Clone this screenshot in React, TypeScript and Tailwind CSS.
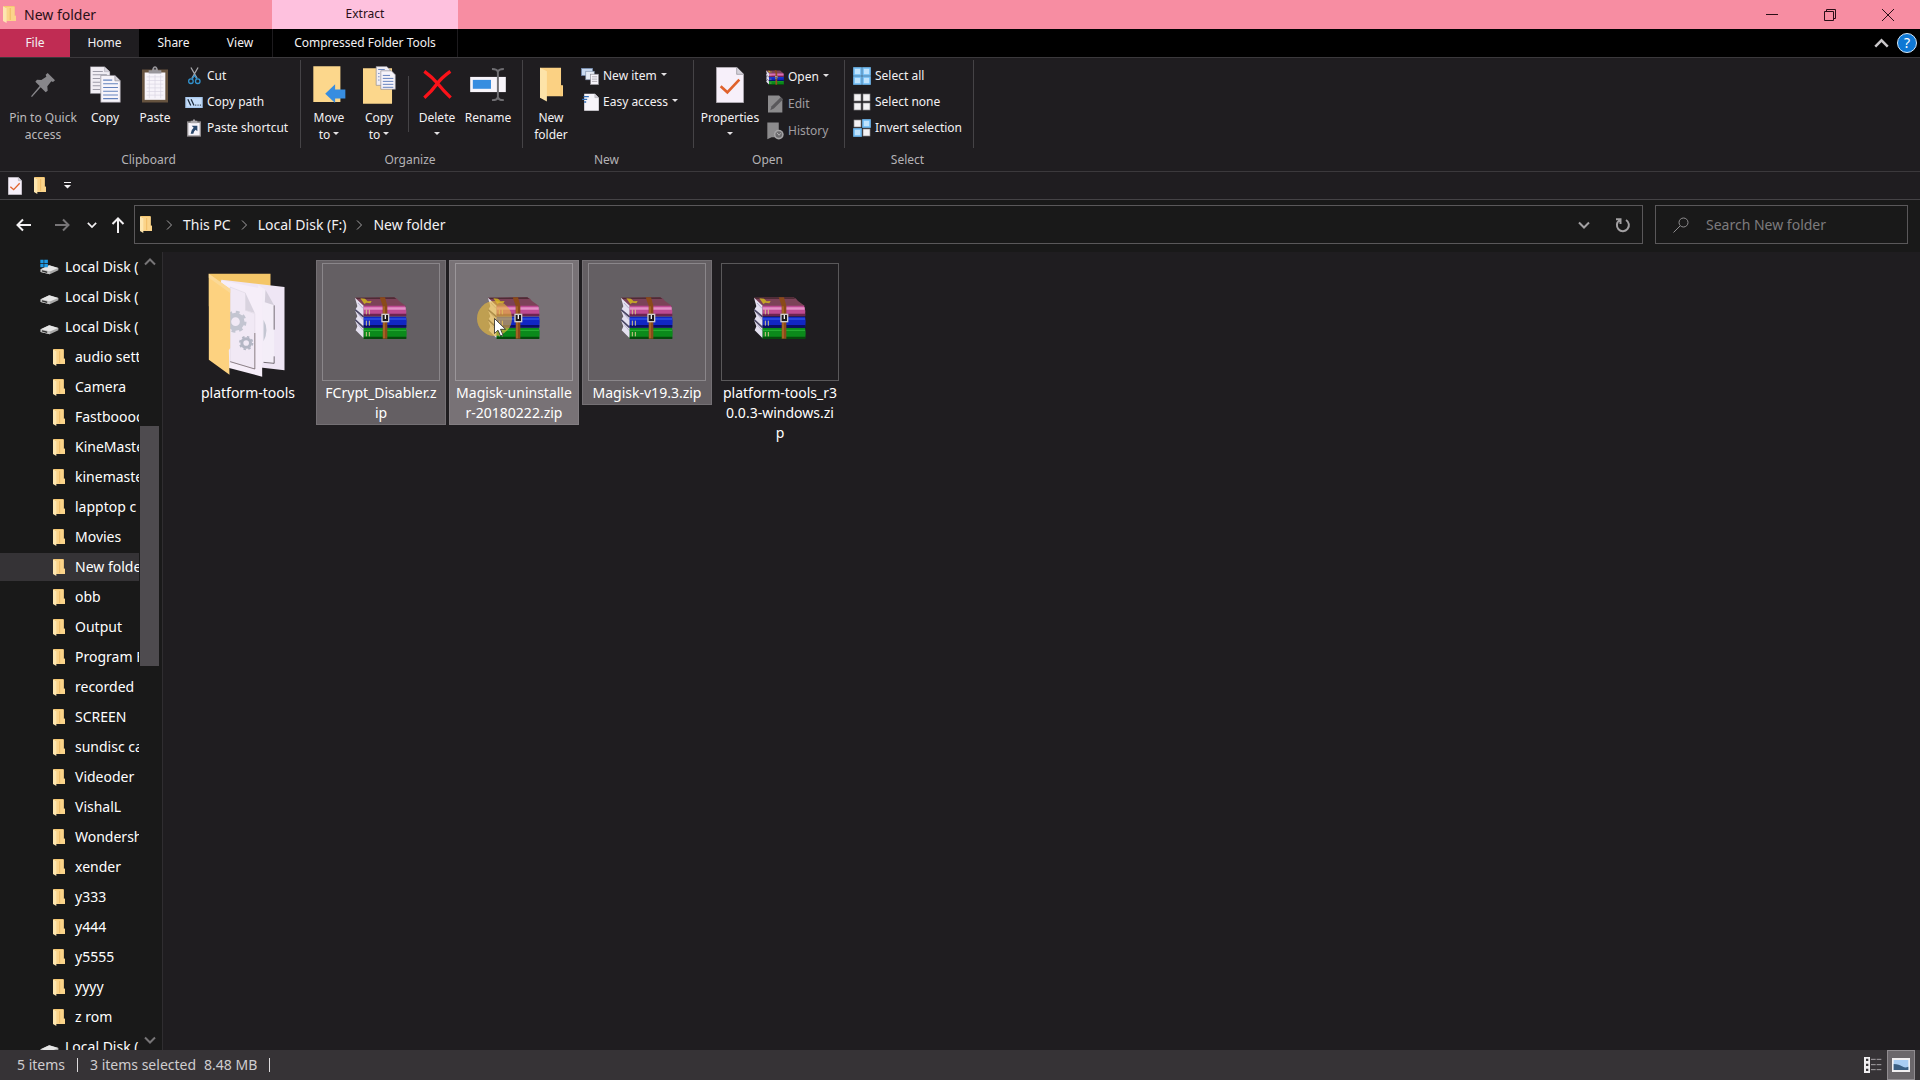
import React, { ReactNode } from "react";

/* ---------- Icons ---------- */

const FolderIcon = ({ className = "w-3 h-[17px]" }: { className?: string }) => (
    <svg viewBox="0 0 36 51" className={className} preserveAspectRatio="none" aria-hidden="true">
        <path d="M1 0H32V29H36V45H8Z" fill="#f5c873" />
        <path d="M9 3H32V29H36V45H9Z" fill="#fbd48a" />
        <path d="M0 1L10 7V51L0 45Z" fill="#fde6b0" />
        <path d="M20 6V42" stroke="#f0bd66" strokeWidth="3" />
    </svg>
);

const DriveIcon = ({ system = false }: { system?: boolean }) => (
    <svg viewBox="0 0 58 48" className="w-[19px] h-4 shrink-0" aria-hidden="true">
        <path d="M2 31L28 19L56 27V34L30 46L2 39Z" fill="#a9a9a9" />
        <path d="M2 31L28 19L56 27L30 38Z" fill="#e6e6e6" />
        <path d="M2 31L30 38V46L2 39Z" fill="#c9c9c9" />
        <path d="M6 36L22 40" stroke="#333" strokeWidth="4" />
        {system && <path d="M1 2H11V12H1ZM13 2H24V12H13ZM1 14H11V25H1ZM13 14H24V25H13Z" fill="#1e9be6" />}
    </svg>
);

const PinIcon = () => (
    <svg viewBox="0 0 72 72" className="w-6 h-6" aria-hidden="true">
        <path d="M50 0L72 22L66 27L61 25L49 40L50 53L44 58L29 43L3 72L0 70L26 39L13 26L18 20L31 21L46 11L44 5Z" fill="#87868a" />
    </svg>
);

const CopyIcon = () => (
    <svg viewBox="0 0 92 110" className="w-[31px] h-[37px]" aria-hidden="true">
        <path d="M1 2H43L59 17V82H1Z" fill="#f1eef4" stroke="#8d8b92" />
        <path d="M43 2V17H59" fill="#d5d2da" stroke="#8d8b92" />
        <path d="M8 16H38M8 26H50M8 37H30M8 48H30M8 59H30M8 70H30" stroke="#9d9ca8" strokeWidth="3" />
        <path d="M32 28H74L90 44V108H32Z" fill="#f7f4fa" stroke="#8d8b92" strokeWidth="2" />
        <path d="M74 28V44H90" fill="#d5d2da" stroke="#8d8b92" strokeWidth="2" />
        <path d="M39 42H66M39 53H83M39 64H83M39 75H83M39 86H83M39 97H83" stroke="#6482bd" strokeWidth="3" />
    </svg>
);

const PasteIcon = () => (
    <svg viewBox="0 0 78 110" className="w-[26px] h-[37px]" aria-hidden="true">
        <path d="M0 10H78V109H0Z" fill="#66533f" />
        <path d="M8 19H70V101H8Z" fill="#f7f4fa" />
        <path d="M14 32H64M14 43H64M14 54H64M14 65H64M14 76H64M14 87H64M22 26V96M39 26V96M56 26V96" stroke="#d9d4e2" strokeWidth="2" />
        <path d="M20 12H30Q32 0 39 0T48 12H58V22H20Z" fill="#98969b" />
        <circle cx="39" cy="8" r="3" fill="#3a383a" />
    </svg>
);

const CutIcon = () => (
    <svg viewBox="0 0 40 54" className="w-[13px] h-[18px]" aria-hidden="true">
        <path d="M9 1L28 34M31 1L12 34" stroke="#a8a8ac" strokeWidth="4" />
        <circle cx="9" cy="43" r="7" fill="none" stroke="#3292ce" strokeWidth="4" />
        <circle cx="30" cy="43" r="7" fill="none" stroke="#3292ce" strokeWidth="4" />
        <path d="M13 36L20 25L27 36" fill="none" stroke="#3292ce" strokeWidth="4" />
    </svg>
);

const CopyPathIcon = () => (
    <svg viewBox="0 0 54 34" className="w-[18px] h-[11px]" aria-hidden="true">
        <rect width="54" height="34" fill="#a9c9ee" />
        <rect x="4" y="4" width="46" height="26" fill="#c7defa" />
        <path d="M8 7L17 26M18 7L27 26" stroke="#1c2a3c" strokeWidth="4" />
        <path d="M31 25H34M38 25H41M45 25H48" stroke="#1c2a3c" strokeWidth="4" />
    </svg>
);

const PasteShortcutIcon = () => (
    <svg viewBox="0 0 42 54" className="w-[14px] h-[18px]" aria-hidden="true">
        <path d="M0 7H42V53H0Z" fill="#8f8b8d" />
        <path d="M4 12H38V49H4Z" fill="#f7f4fa" />
        <path d="M11 5H17Q21 -3 25 5H31V13H11Z" fill="#a8a5a9" />
        <path d="M14 20H31V37L26 32Q20 36 19 44H11Q12 32 20 26Z" fill="#29476b" />
    </svg>
);

const MoveToIcon = () => (
    <svg viewBox="0 0 98 112" className="w-[33px] h-[37px]" aria-hidden="true">
        <path d="M0 1H82V109H0Z" fill="#fcd78c" />
        <path d="M36 84L66 55V71H97V98H66V112Z" fill="#378de0" />
    </svg>
);

const CopyToIcon = () => (
    <svg viewBox="0 0 100 114" className="w-[33px] h-[38px]" aria-hidden="true">
        <path d="M0 6H88V114H0Z" fill="#fcd78c" />
        <path d="M40 1H72L82 11V58H40Z" fill="#f1eef4" stroke="#8d8b92" strokeWidth="2" />
        <path d="M54 14H86L98 26V70H54Z" fill="#f7f4fa" stroke="#8d8b92" strokeWidth="2" />
        <path d="M60 28H82M60 37H92M60 46H92M60 55H92M60 64H92M46 10H66M46 22H50M46 32H50M46 42H50" stroke="#6482bd" strokeWidth="3" />
    </svg>
);

const DeleteIcon = () => (
    <svg viewBox="0 0 86 88" className="w-[29px] h-[29px]" aria-hidden="true">
        <path d="M3 4Q28 22 44 42T83 84M82 4Q54 24 40 44T3 84" fill="none" stroke="#fb1219" strokeWidth="10" />
    </svg>
);

const RenameIcon = () => (
    <svg viewBox="0 0 108 100" className="w-9 h-[33px]" aria-hidden="true">
        <rect x="0" y="27" width="108" height="46" fill="#f7f4fa" />
        <rect x="8" y="36" width="55" height="27" fill="#378de0" />
        <path d="M66 3Q82 3 84 12Q86 3 102 3M84 10V90M66 98Q82 98 84 88Q86 98 102 98" fill="none" stroke="#6f6e72" strokeWidth="6" />
    </svg>
);

const NewFolderIcon = () => (
    <svg viewBox="0 0 70 104" className="w-[23px] h-[35px]" aria-hidden="true">
        <path d="M0 1H64V54H70V88H20L0 92Z" fill="#fbd183" />
        <path d="M0 1L21 12V104L0 92Z" fill="#fde3a8" />
        <path d="M64 54V88" stroke="#eebd64" strokeWidth="2" />
    </svg>
);

const NewItemIcon = () => (
    <svg viewBox="0 0 54 52" className="w-[18px] h-[17px]" aria-hidden="true">
        <rect x="1" y="1" width="34" height="22" fill="#c8d9ef" stroke="#6f88ae" strokeWidth="2" />
        <rect x="14" y="10" width="26" height="26" fill="#e5ebf4" stroke="#7f8da6" strokeWidth="2" />
        <rect x="29" y="19" width="24" height="32" fill="#f7f4fa" stroke="#8d8b92" strokeWidth="2" />
        <path d="M33 27H49M33 34H49M33 41H49" stroke="#8d8b92" strokeWidth="2" />
    </svg>
);

const EasyAccessIcon = () => (
    <svg viewBox="0 0 50 54" className="w-[17px] h-[18px]" aria-hidden="true">
        <path d="M6 2H38L50 14V53H6Z" fill="#f7f4fa" />
        <path d="M38 2V14H50" fill="#cfccd4" stroke="#8d8b92" />
        <path d="M4 11H20M0 19H15M6 27H12" stroke="#2f6db8" strokeWidth="4" />
    </svg>
);

const CheckDocIcon = ({ className }: { className: string }) => (
    <svg viewBox="0 0 84 108" className={className} aria-hidden="true">
        <path d="M1 1H62L83 22V107H1Z" fill="#f7f0fa" stroke="#a09da3" strokeWidth="2" />
        <path d="M62 1V22H83" fill="#d5d2da" stroke="#8d8b92" strokeWidth="2" />
        <path d="M14 58L34 76L70 38" fill="none" stroke="#e0622c" strokeWidth="8" />
    </svg>
);

const EditIcon = () => (
    <svg viewBox="0 0 46 54" className="w-[15px] h-[18px]" aria-hidden="true">
        <path d="M0 1H34L44 11V53H0Z" fill="#8c8b8d" />
        <path d="M7 46L11 34L39 6L46 13L18 41Z" fill="#59585b" />
    </svg>
);

const HistoryIcon = () => (
    <svg viewBox="0 0 52 54" className="w-[17px] h-[18px]" aria-hidden="true">
        <path d="M1 1H36V46H14L1 52Z" fill="#8c8b8d" />
        <circle cx="36" cy="38" r="15" fill="#a4a3a5" />
        <circle cx="36" cy="38" r="10" fill="#6c6b6e" />
        <path d="M30 32L37 40L42 34" fill="none" stroke="#b5b4b6" strokeWidth="3" />
    </svg>
);

const SelectIcon = ({ on }: { on: boolean[] }) => (
    <svg viewBox="0 0 54 54" className="w-[18px] h-[18px]" aria-hidden="true">
        {on.map((active, i) => (
            <rect
                key={i}
                x={(i % 2) * 27 + 3}
                y={Math.floor(i / 2) * 27 + 3}
                width="21"
                height="21"
                fill={active ? "#bfe3fd" : "#f4f2f4"}
                stroke={active ? "#72bdf3" : "#8a888b"}
                strokeWidth={active ? 5 : 2}
            />
        ))}
    </svg>
);

const WinrarIcon = ({ className }: { className: string }) => (
    <svg viewBox="0 0 156 126" className={className} aria-hidden="true">
        {/* Top cover */}
        <path d="M0 2L118 1Q126 3 132 12L154 28H26Q10 20 0 2Z" fill="#7c4258" />
        <path d="M0 2L118 1L124 6H6Z" fill="#4f2b35" />
        <path d="M16 4L30 5L38 13L50 12L46 19L34 17L28 21Z" fill="#c3a527" />
        {/* Page edges */}
        <path d="M0 2L26 26V124L2 100L7 88L0 70L7 58L0 40L7 28Z" fill="#e4e0ef" />
        <path d="M0 38L26 60M0 68L26 92" stroke="#4b4763" strokeWidth="5" />
        <path d="M9 18L24 34M9 50L24 68M9 82L24 100" stroke="#b6b0ce" strokeWidth="3" />
        {/* Spines */}
        <path d="M26 26H150Q156 40 153 57H26Z" fill="#bd4a92" />
        <path d="M26 31H152V38H26Z" fill="#e48fc6" />
        <path d="M26 50H154V58H26Z" fill="#6d2550" />
        <path d="M26 59H153Q157 74 153 91H26Z" fill="#1127c4" />
        <path d="M26 64H153V68H26Z" fill="#2d52e4" />
        <path d="M26 84H154V92H26Z" fill="#080e66" />
        <path d="M26 93H153Q157 108 153 125H26Z" fill="#0b8a1b" />
        <path d="M26 98H153V102H26Z" fill="#25ab32" />
        <path d="M26 119H154V126H26Z" fill="#064a0c" />
        <path d="M34 37V52M43 37V52M34 71V86M43 71V86M34 105V118M43 105V118" stroke="#d3c58a" strokeWidth="3" />
        {/* Strap and buckle */}
        <path d="M74 1H90L97 26V125H83V26Z" fill="#8a4a1a" />
        <path d="M87 28V124" stroke="#bf7a2e" strokeWidth="3" />
        <rect x="81" y="52" width="20" height="22" fill="#1e1a1a" stroke="#cfcccd" strokeWidth="4" />
        <path d="M91 54V66" stroke="#f2f2f2" strokeWidth="4" />
    </svg>
);

const Gear = ({ x, y, r, fill }: { x: number; y: number; r: number; fill: string }) => (
    <g fill="none" stroke={fill}>
        <circle cx={x} cy={y} r={r} strokeWidth={r * 0.7} />
        <circle cx={x} cy={y} r={r * 1.45} strokeWidth={r * 0.4} strokeDasharray={`${r * 0.57} ${r * 0.57}`} />
    </g>
);

const BigFolderIcon = () => (
    <svg viewBox="0 0 230 312" className="w-[77px] h-[104px]" aria-hidden="true">
        <path d="M2 2H187V100H2Z" fill="#f4c668" />
        <path d="M40 20L229 42V292L40 270Z" fill="#efe6f5" />
        <path d="M150 36L172 50L198 97V272L150 268Z" fill="#f4eef8" />
        <path d="M172 50L198 97L170 88Z" fill="#d4cedb" />
        <path d="M198 97V170M198 250V271L166 268" fill="none" stroke="#352f35" strokeWidth="2" />
        <path d="M166 140Q184 170 166 205Z" fill="#c4c6d2" />
        <path d="M38 22L162 47V311L60 284Z" fill="#f6eef9" />
        <path d="M66 42L112 60V112L140 122V288L66 266Z" fill="#f1e9f5" stroke="#cfc7d4" strokeWidth="1" />
        <path d="M112 60L140 120L112 112Z" fill="#d9d3df" />
        <path d="M140 180V288L66 266" fill="none" stroke="#5d5053" strokeWidth="2" />
        <Gear x={82} y={146} r={20} fill="#c3c5d1" />
        <Gear x={114} y={210} r={13} fill="#b3b6c4" />
        <path d="M2 2L66 48V225L62 232L64 305L2 260Z" fill="#fdd280" />
        <path d="M2 2L66 48V60L2 14Z" fill="#fbd997" />
    </svg>
);

const Chevron = ({ d, className }: { d: string; className: string }) => (
    <svg viewBox="0 0 12 12" className={className} fill="none" stroke="currentColor" aria-hidden="true">
        <path d={d} />
    </svg>
);

const DOWN = "M1 3.5L6 8.5L11 3.5";
const UP = "M1 8.5L6 3.5L11 8.5";
const RIGHT = "M4 1.5L8.5 6L4 10.5";

const Caret = () => (
    <svg viewBox="0 0 6 3" className="inline-block w-1.5 h-[3px] mb-1" aria-hidden="true">
        <path d="M0 0H6L3 3Z" fill="#e4e2e4" />
    </svg>
);

/* ---------- Ribbon ---------- */

type GroupProps = { label: string; width: string; children: ReactNode };

const Group = ({ label, width, children }: GroupProps) => (
    <section className={`flex flex-col shrink-0 ${width}`} aria-label={label}>
        <div className="flex h-[88px] border-r border-[#454346]">{children}</div>
        <div className="h-[23px] pr-1 leading-[23px] text-center text-[#b4b2b5]">{label}</div>
    </section>
);

type BigButtonProps = { icon: ReactNode; width?: string; disabled?: boolean; children: ReactNode };

const BigButton = ({ icon, width = "w-[50px]", disabled, children }: BigButtonProps) => (
    <button
        disabled={disabled}
        className={`flex flex-col items-center shrink-0 leading-[17px] whitespace-nowrap disabled:text-[#bcbabd] ${width}`}
    >
        <span className="flex h-[49px] items-center justify-center">{icon}</span>
        <span>{children}</span>
    </button>
);

type SmallButtonProps = { icon: ReactNode; caret?: boolean; disabled?: boolean; children: ReactNode };

const SmallButton = ({ icon, caret, disabled, children }: SmallButtonProps) => (
    <button disabled={disabled} className="flex h-[26px] items-center gap-1 whitespace-nowrap disabled:text-[#a09ea1]">
        <span className="flex w-[18px] justify-center">{icon}</span>
        <span>{children}</span>
        {caret && <Caret />}
    </button>
);

const Ribbon = () => (
    <div className="flex h-[115px] shrink-0 border-y border-[#3b393c] bg-[#1f1d20] pt-0.5 text-xs text-[#f3f1f3]">
        <Group label="Clipboard" width="w-[301px]">
            <BigButton icon={<PinIcon />} width="w-[86px]" disabled>
                Pin to Quick<br />access
            </BigButton>
            <BigButton icon={<CopyIcon />} width="w-[38px]">Copy</BigButton>
            <div className="flex pl-1.5">
                <BigButton icon={<PasteIcon />}>Paste</BigButton>
            </div>
            <div className="flex flex-col pt-[3px] pl-[5px]">
                <SmallButton icon={<CutIcon />}>Cut</SmallButton>
                <SmallButton icon={<CopyPathIcon />}>Copy path</SmallButton>
                <SmallButton icon={<PasteShortcutIcon />}>Paste shortcut</SmallButton>
            </div>
        </Group>

        <Group label="Organize" width="w-[222px]">
            <div className="flex pl-[3px]">
                <BigButton icon={<MoveToIcon />}>
                    Move<br />to <Caret />
                </BigButton>
                <BigButton icon={<CopyToIcon />}>
                    Copy<br />to <Caret />
                </BigButton>
            </div>
            <div className="mt-4 mr-[3px] ml-1 h-14 w-px bg-[#454346]" />
            <BigButton icon={<DeleteIcon />}>
                Delete<br /><Caret />
            </BigButton>
            <BigButton icon={<RenameIcon />} width="w-[52px]">Rename</BigButton>
        </Group>

        <Group label="New" width="w-[171px]">
            <div className="flex pl-[3px]">
                <BigButton icon={<NewFolderIcon />}>
                    New<br />folder
                </BigButton>
            </div>
            <div className="flex flex-col pt-[3px] pl-[5px]">
                <SmallButton icon={<NewItemIcon />} caret>New item</SmallButton>
                <SmallButton icon={<EasyAccessIcon />} caret>Easy access</SmallButton>
            </div>
        </Group>

        <Group label="Open" width="w-[151px]">
            <div className="flex pl-[3px]">
                <BigButton icon={<CheckDocIcon className="w-7 h-9" />} width="w-[66px]">
                    Properties<br /><Caret />
                </BigButton>
            </div>
            <div className="flex flex-col gap-px pt-1 pl-[3px]">
                <SmallButton icon={<WinrarIcon className="w-[18px] h-[15px]" />} caret>Open</SmallButton>
                <SmallButton icon={<EditIcon />} disabled>Edit</SmallButton>
                <SmallButton icon={<HistoryIcon />} disabled>History</SmallButton>
            </div>
        </Group>

        <Group label="Select" width="w-[129px]">
            <div className="flex flex-col pt-[3px] pl-2">
                <SmallButton icon={<SelectIcon on={[true, true, true, true]} />}>Select all</SmallButton>
                <SmallButton icon={<SelectIcon on={[false, false, false, false]} />}>Select none</SmallButton>
                <SmallButton icon={<SelectIcon on={[false, true, true, false]} />}>Invert selection</SmallButton>
            </div>
        </Group>
    </div>
);

/* ---------- Title bar and tabs ---------- */

const TitleBar = () => (
    <header className="flex h-[29px] shrink-0 bg-[#f78da2] text-[#2a0f17]">
        <div className="flex w-[272px] items-center gap-2 pl-[3px] text-sm">
            <FolderIcon className="w-[13px] h-[17px]" />
            <h1>New folder</h1>
        </div>
        <div className="flex w-[186px] justify-center bg-[#fec1de] text-xs leading-7">Extract</div>
        <div className="ml-auto flex pr-[3px]">
            <button aria-label="Minimize" className="flex w-[58px] items-center justify-center">
                <svg viewBox="0 0 12 12" className="w-3 h-3" stroke="currentColor"><path d="M0 5.5H12" /></svg>
            </button>
            <button aria-label="Restore" className="flex w-[58px] items-center justify-center">
                <svg viewBox="0 0 12 12" className="w-3 h-3" fill="none" stroke="currentColor">
                    <path d="M.5 2.5H9.5V11.5H.5ZM2.5 2.5V.5H11.5V9.5H9.5" />
                </svg>
            </button>
            <button aria-label="Close" className="flex w-[58px] items-center justify-center">
                <svg viewBox="0 0 12 12" className="w-3 h-3" stroke="currentColor"><path d="M0 0L12 12M12 0L0 12" /></svg>
            </button>
        </div>
    </header>
);

const Tabs = () => (
    <nav className="flex h-7 shrink-0 bg-black text-xs text-[#f3f1f3]">
        <button className="w-[70px] bg-[#c02c53]">File</button>
        <button className="w-[69px] bg-[#1f1d20]">Home</button>
        <button className="w-[69px]">Share</button>
        <button className="w-[64px]">View</button>
        <button className="w-[186px] border-x border-[#1d1b1e]">Compressed Folder Tools</button>
        <div className="ml-auto flex items-center gap-2 pr-[3px]">
            <button aria-label="Minimize the Ribbon">
                <Chevron d={UP} className="w-[15px] h-[15px] stroke-2 text-[#c9c7c9]" />
            </button>
            <button
                aria-label="Help"
                className="flex h-5 w-5 items-center justify-center rounded-full border border-[#d5e8f8] bg-[#0f78d4] text-sm leading-none text-white"
            >
                ?
            </button>
        </div>
    </nav>
);

const QuickAccess = () => (
    <div className="flex h-7 shrink-0 items-center border-b border-[#454346] bg-[#1f1d20] pl-2">
        <button aria-label="Properties"><CheckDocIcon className="w-[14px] h-[18px]" /></button>
        <button aria-label="New folder" className="ml-3"><FolderIcon /></button>
        <button aria-label="Customize Quick Access Toolbar" className="ml-[18px]">
            <svg viewBox="0 0 7 7" className="w-[7px] h-[7px]" fill="#f3f1f3"><path d="M0 0H7V1H0ZM0 3H7L3.5 6.5Z" /></svg>
        </button>
    </div>
);

/* ---------- Address bar ---------- */

const Arrow = ({ d, className = "" }: { d: string; className?: string }) => (
    <svg viewBox="0 0 16 16" className={`w-4 h-4 ${className}`} fill="none" stroke="currentColor" strokeWidth="2">
        <path d={d} />
    </svg>
);

const AddressBar = () => (
    <div className="flex h-[52px] shrink-0 items-start bg-[#191919] pt-[5px] pr-3 text-sm text-[#f3f1f3]">
        <div className="flex h-[39px] w-[134px] shrink-0 items-center pl-4">
            <button aria-label="Back"><Arrow d="M15 8H1.5M7 2.5L1.5 8L7 13.5" /></button>
            <button aria-label="Forward" className="ml-[22px] text-[#777577]"><Arrow d="M1 8H14.5M9 2.5L14.5 8L9 13.5" /></button>
            <button aria-label="Recent locations" className="ml-[17px]"><Chevron d={DOWN} className="w-2.5 h-2.5 stroke-2" /></button>
            <button aria-label="Up" className="ml-[13px]"><Arrow d="M8 16V1.5M2.5 7L8 1.5L13.5 7" /></button>
        </div>
        <div className="flex h-[39px] flex-1 items-center border border-[#5a585a] pl-[5px]">
            <FolderIcon className="mr-1 w-3 h-[17px]" />
            {["This PC", "Local Disk (F:)", "New folder"].map((part) => (
                <React.Fragment key={part}>
                    <Chevron d={RIGHT} className="mr-2 ml-[7px] h-3 w-3 shrink-0 text-[#a3a1a3]" />
                    <a href="#" className="whitespace-nowrap">{part}</a>
                </React.Fragment>
            ))}
            <button aria-label="Previous locations" className="ml-auto text-[#a3a1a3]">
                <Chevron d={DOWN} className="w-3 h-3 stroke-2" />
            </button>
            <button aria-label="Refresh" className="mr-[11px] ml-[25px] text-[#a3a1a3]">
                <svg viewBox="0 0 16 16" className="w-4 h-4" fill="none" stroke="currentColor" strokeWidth="2">
                    <path d="M11 3A6 6 0 1 1 4.5 3.2M1 2.2H5.5V7" />
                </svg>
            </button>
        </div>
        <label className="ml-3 flex h-[39px] w-[253px] items-center border border-[#5a585a] pl-[17px]">
            <svg viewBox="0 0 16 16" className="w-4 h-4 shrink-0 text-[#8f8d8f]" fill="none" stroke="currentColor">
                <circle cx="10.5" cy="5.5" r="4.5" />
                <path d="M7 9L.5 15.5" />
            </svg>
            <input
                type="text"
                aria-label="Search New folder"
                placeholder="Search New folder"
                className="ml-[17px] w-full bg-transparent outline-none placeholder:text-[#7d7b7d]"
            />
        </label>
    </div>
);

/* ---------- Navigation pane ---------- */

const folders = [
    "audio settings", "Camera", "Fastbooood", "KineMaster", "kinemaster pro", "lapptop c", "Movies", "New folder", "obb",
    "Output", "Program Files", "recorded", "SCREEN", "sundisc card", "Videoder", "VishalL", "Wondershare", "xender",
    "y333", "y444", "y5555", "yyyy", "z rom",
];

const Drive = ({ name, system }: { name: string; system?: boolean }) => (
    <li>
        <a href="#" className="flex h-[30px] items-center gap-1.5 pl-10 whitespace-nowrap">
            <DriveIcon system={system} />
            {name}
        </a>
    </li>
);

const Sidebar = () => (
    <aside className="flex w-[163px] shrink-0 border-r border-[#2f2d30] bg-[#191919] text-sm text-white">
        <ul className="w-[139px] overflow-hidden">
            <Drive name="Local Disk (C:)" system />
            <Drive name="Local Disk (D:)" />
            <Drive name="Local Disk (F:)" />
            {folders.map((name) => (
                <li key={name} className="flex h-[30px] items-center">
                    <a
                        href="#"
                        className={`flex h-7 w-full items-center gap-2.5 pl-[53px] whitespace-nowrap ${name === "New folder" ? "bg-[#353336]" : ""}`}
                    >
                        <FolderIcon className="w-3 h-[17px] shrink-0" />
                        {name}
                    </a>
                </li>
            ))}
            <Drive name="Local Disk (G:)" />
        </ul>
        {/* Scroll bar */}
        <div className="ml-px flex w-[19px] flex-col items-center text-[#777577]">
            <Chevron d={UP} className="my-1 w-3 h-3 stroke-2" />
            <div className="grow-[154]" />
            <div className="w-full grow-[240] bg-[#4e4b4f]" />
            <div className="grow-[364]" />
            <Chevron d={DOWN} className="my-1 w-3 h-3 stroke-2" />
        </div>
    </aside>
);

/* ---------- Files ---------- */

const files = [
    { lines: ["FCrypt_Disabler.z", "ip"], look: "border-[#747074] bg-[#645f63]", frame: "border-[#8a868a]" },
    { lines: ["Magisk-uninstalle", "r-20180222.zip"], look: "border-[#837e82] bg-[#787276]", frame: "border-[#9b969a]", pointer: true },
    { lines: ["Magisk-v19.3.zip"], look: "border-[#747074] bg-[#645f63]", frame: "border-[#8a868a]" },
    { lines: ["platform-tools_r3", "0.0.3-windows.zi", "p"], look: "border-transparent", frame: "border-[#5a585a]" },
];

const Pointer = () => (
    <div className="absolute top-10 left-[27px]">
        <div className="h-[35px] w-[35px] rounded-full bg-[#e5b73d]/65" />
        <svg viewBox="0 0 12 19" className="absolute top-[17px] left-[17px] h-[19px] w-3" aria-hidden="true">
            <path d="M.5 .5V15.5L4 12.2L6.5 18L9 17L6.5 11.3H11.5Z" fill="#fff" stroke="#222" strokeWidth=".8" />
        </svg>
    </div>
);

const FileGrid = () => (
    <main className="flex flex-1 flex-wrap content-start items-start gap-[3px] bg-[#1f1d20] pt-2 pl-5 text-sm leading-5 text-white">
        <a href="#" className="flex w-[130px] flex-col items-center border border-transparent pt-0.5 pb-px">
            <span className="flex h-[120px] items-center pt-1 pr-1"><BigFolderIcon /></span>
            <span>platform-tools</span>
        </a>
        {files.map((file) => (
            <a
                key={file.lines[0]}
                href="#"
                className={`relative flex w-[130px] flex-col items-center border pt-0.5 pb-px ${file.look}`}
            >
                <span className={`mb-0.5 flex h-[118px] w-[118px] items-center justify-center border pb-2 ${file.frame}`}>
                    <WinrarIcon className="w-[52px] h-[42px]" />
                </span>
                {file.lines.map((line) => (
                    <span key={line} className="whitespace-nowrap">{line}</span>
                ))}
                {file.pointer && <Pointer />}
            </a>
        ))}
    </main>
);

const StatusBar = () => (
    <footer className="flex h-[30px] shrink-0 items-center bg-[#363336] pl-[17px] text-sm text-[#cfcdcf]">
        <span>5 items</span>
        <span className="mx-3 h-3.5 w-px bg-[#dddbdd]" />
        <span>3 items selected</span>
        <span className="ml-2">8.48 MB</span>
        <span className="mx-3 h-3.5 w-px bg-[#dddbdd]" />
        <button aria-label="Details view" className="ml-auto mr-[5px]">
            <svg viewBox="0 0 54 48" className="h-4 w-[18px]" fill="none">
                <path d="M0 0H18V48H0Z" fill="#f1eff1" />
                <path d="M6 5H13V12H6ZM6 20H13V27H6ZM6 35H13V42H6Z" fill="#3a373a" />
                <path d="M21 7H54M21 23H54M21 38H54" stroke="#a5a2a5" strokeWidth="3" strokeDasharray="14 3" />
            </svg>
        </button>
        <button aria-label="Large icons view" className="mr-[5px] flex h-[30px] w-7 items-center justify-center border border-[#918d91] bg-[#6b676b]">
            <svg viewBox="0 0 54 42" className="h-3.5 w-[18px]">
                <path d="M0 0H54V42H0Z" fill="#f1eff1" />
                <path d="M5 6H49V36H5Z" fill="#a9cdf3" />
                <path d="M5 18Q22 19 30 25T49 26V36H5Z" fill="#3b5f83" />
            </svg>
        </button>
    </footer>
);

const App = () => {
    return (
        <div className="flex h-screen flex-col overflow-hidden bg-[#191919] font-['Noto_Sans','Open_Sans',sans-serif]">
            <TitleBar />
            <Tabs />
            <Ribbon />
            <QuickAccess />
            <AddressBar />
            <div className="flex min-h-0 flex-1">
                <Sidebar />
                <FileGrid />
            </div>
            <StatusBar />
        </div>
    );
};

export default App;
